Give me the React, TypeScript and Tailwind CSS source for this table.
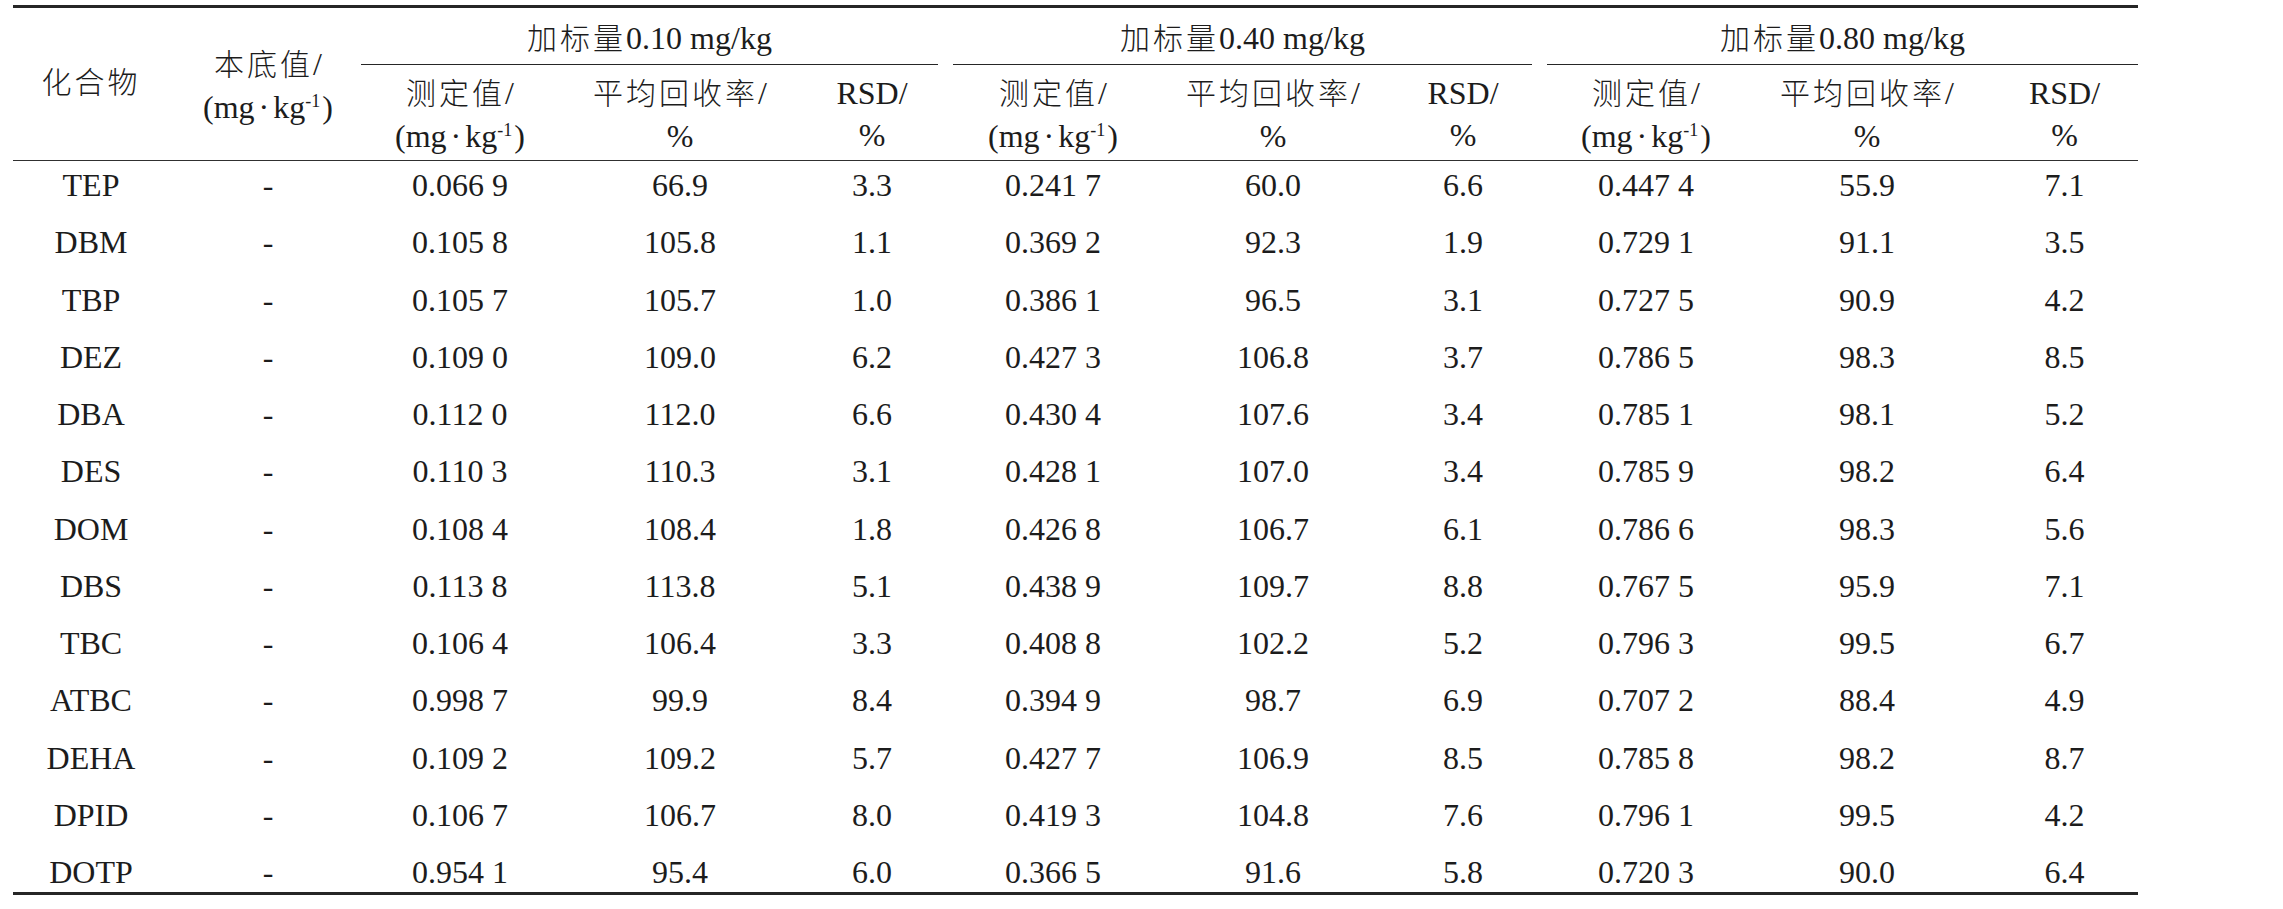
import React from "react";

const COLS =
  "grid grid-cols-[156px_198px_186px_254px_130px_232px_208px_172px_194px_248px_147px]";

const rows: string[][] = [
  ["TEP", "-", "0.066 9", "66.9", "3.3", "0.241 7", "60.0", "6.6", "0.447 4", "55.9", "7.1"],
  ["DBM", "-", "0.105 8", "105.8", "1.1", "0.369 2", "92.3", "1.9", "0.729 1", "91.1", "3.5"],
  ["TBP", "-", "0.105 7", "105.7", "1.0", "0.386 1", "96.5", "3.1", "0.727 5", "90.9", "4.2"],
  ["DEZ", "-", "0.109 0", "109.0", "6.2", "0.427 3", "106.8", "3.7", "0.786 5", "98.3", "8.5"],
  ["DBA", "-", "0.112 0", "112.0", "6.6", "0.430 4", "107.6", "3.4", "0.785 1", "98.1", "5.2"],
  ["DES", "-", "0.110 3", "110.3", "3.1", "0.428 1", "107.0", "3.4", "0.785 9", "98.2", "6.4"],
  ["DOM", "-", "0.108 4", "108.4", "1.8", "0.426 8", "106.7", "6.1", "0.786 6", "98.3", "5.6"],
  ["DBS", "-", "0.113 8", "113.8", "5.1", "0.438 9", "109.7", "8.8", "0.767 5", "95.9", "7.1"],
  ["TBC", "-", "0.106 4", "106.4", "3.3", "0.408 8", "102.2", "5.2", "0.796 3", "99.5", "6.7"],
  ["ATBC", "-", "0.998 7", "99.9", "8.4", "0.394 9", "98.7", "6.9", "0.707 2", "88.4", "4.9"],
  ["DEHA", "-", "0.109 2", "109.2", "5.7", "0.427 7", "106.9", "8.5", "0.785 8", "98.2", "8.7"],
  ["DPID", "-", "0.106 7", "106.7", "8.0", "0.419 3", "104.8", "7.6", "0.796 1", "99.5", "4.2"],
  ["DOTP", "-", "0.954 1", "95.4", "6.0", "0.366 5", "91.6", "5.8", "0.720 3", "90.0", "6.4"],
];

function C({ children }: { children: React.ReactNode }) {
  return <span className="text-[30px] tracking-[3px] font-light">{children}</span>;
}

function Unit() {
  return (
    <span className="whitespace-nowrap">
      (mg<span className="mx-[4px]">·</span>kg
      <sup className="text-[18px] -top-[11px]">-1</sup>
      <span className="ml-[2px]">)</span>
    </span>
  );
}

function SubHead({ kind }: { kind: number }) {
  if (kind === 0)
    return (
      <div className="flex flex-col items-center justify-center pt-[3px] leading-[42px]">
        <span>
          <C>测定值</C>/
        </span>
        <Unit />
      </div>
    );
  if (kind === 1)
    return (
      <div className="flex flex-col items-center justify-center pt-[3px] leading-[42px]">
        <span>
          <C>平均回收率</C>/
        </span>
        <span>%</span>
      </div>
    );
  return (
    <div className="flex flex-col items-center justify-center pt-[3px] leading-[42px]">
      <span>RSD/</span>
      <span>%</span>
    </div>
  );
}

export default function App() {
  return (
    <div className="w-[2283px] h-[909px] bg-white pt-[5px] pl-[13px] font-['Liberation_Serif','Noto_Sans_CJK_SC',serif] text-[32px] text-[#1c1c1c]">
      <div className="w-[2125px] border-t-[3px] border-b-[3px] border-[#262626]">
        <div className={`${COLS} grid-rows-[57px_95px] border-b border-[#303030]`}>
          <div className="row-span-2 flex items-center justify-center pb-[4px]">
            <C>化合物</C>
          </div>
          <div className="row-span-2 flex flex-col items-center justify-center pt-[3px] leading-[43px]">
            <span>
              <C>本底值</C>/
            </span>
            <Unit />
          </div>
          <div className="col-span-3 -ml-[6px] -mr-[1px] flex items-end justify-center border-b border-[#262626]">
            <span className="pb-[4px] leading-[42px]">
              <C>加标量</C>0.10 mg/kg
            </span>
          </div>
          <div className="col-span-3 ml-[16px] mr-[17px] flex items-end justify-center border-b border-[#262626]">
            <span className="pb-[4px] leading-[42px]">
              <C>加标量</C>0.40 mg/kg
            </span>
          </div>
          <div className="col-span-3 -ml-[2px] flex items-end justify-center border-b border-[#262626]">
            <span className="pb-[4px] leading-[42px]">
              <C>加标量</C>0.80 mg/kg
            </span>
          </div>
          <SubHead kind={0} />
          <SubHead kind={1} />
          <SubHead kind={2} />
          <SubHead kind={0} />
          <SubHead kind={1} />
          <SubHead kind={2} />
          <SubHead kind={0} />
          <SubHead kind={1} />
          <SubHead kind={2} />
        </div>
        <div className="flex flex-col gap-[17.25px] pt-[4px]">
          {rows.map((r) => (
            <div key={r[0]} className={`${COLS} leading-[40px] text-center`}>
              {r.map((v, i) => (
                <span key={i} className="whitespace-pre">
                  {v}
                </span>
              ))}
            </div>
          ))}
        </div>
      </div>
    </div>
  );
}
